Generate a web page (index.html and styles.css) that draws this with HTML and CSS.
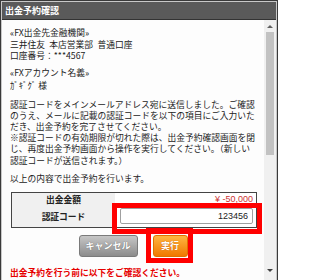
FILE: index.html
```html
<!DOCTYPE html>
<html lang="ja">
<head>
<meta charset="utf-8">
<title>出金予約確認</title>
<link rel="stylesheet" href="styles.css">
</head>
<body>
<div class="window">
  <div class="titlebar">出金予約確認</div>
  <div class="main">
    <div class="content">
      <p class="head">«FX出金先金融機関»</p>
      <p class="val">三井住友&ensp;本店営業部&ensp;普通口座</p>
      <p class="val">口座番号：***4567</p>
      <p class="head head2">«FXアカウント名義»</p>
      <p class="name">ｶﾞｷﾞｸﾞ 様</p>
      <p class="notice">認証コードをメインメールアドレス宛に送信しました。ご確認<br>のうえ、メールに記載の認証コードを以下の項目にご入力いた<br>だき、出金予約を完了させてください。<br>※認証コードの有効期限が切れた際は、出金予約確認画面を閉<br>じ、再度出金予約画面から操作を実行してください。（新しい<br>認証コードが送信されます。）</p>
      <p class="confirm">以上の内容で出金予約を行います。</p>
      <div class="summary">
        <div class="label row1">出金金額</div>
        <div class="value row1 amount">¥ -50,000</div>
        <div class="label row2">認証コード</div>
        <div class="value row2"><input class="code-input" type="text" value="123456" readonly></div>
      </div>
      <div class="actions">
        <button class="btn cancel" type="button">キャンセル</button>
        <button class="btn exec" type="button">実行</button>
      </div>
      <p class="warning">出金予約を行う前に以下をご確認ください。</p>
    </div>
    <div class="scrollbar">
      <div class="sb-up"><span class="arrow-up"></span></div>
      <div class="sb-track"><div class="sb-thumb"></div></div>
      <div class="sb-down"><span class="arrow-down"></span></div>
    </div>
  </div>
  <div class="mark mark-input"></div>
  <div class="mark mark-exec"></div>
</div>
</body>
</html>
```
FILE: styles.css
```css
html, body {
  margin: 0;
  padding: 0;
  background: #ffffff;
}
body {
  width: 280px;
  height: 280px;
  overflow: hidden;
  font-family: "Noto Sans CJK JP", "Noto Sans", sans-serif;
  font-size: 8.75px;
  color: #222222;
}
p {
  margin: 0;
}
.window {
  position: relative;
  width: 274px;
  height: 278px;
  border: 1px solid #3a3a3a;
  border-bottom: 0;
  padding: 1px 1px 0 1px;
  background: #c8c8c8;
  display: flex;
  flex-direction: column;
}
.titlebar {
  height: 17px;
  line-height: 17px;
  background: #5a5a5a;
  color: #ffffff;
  font-weight: bold;
  font-size: 9px;
  padding-left: 3px;
  border-bottom: 1px solid #333333;
  flex: none;
}
.main {
  flex: 1;
  display: flex;
  min-height: 0;
  background: #fdfdfd;
}
.content {
  flex: 1;
  padding: 6px 8px 0 8px;
  min-width: 0;
}
.head {
  line-height: 13px;
}
.head2 {
  margin-top: 5px;
}
.val {
  line-height: 11px;
}
.name {
  line-height: 13px;
}
.notice {
  margin-top: 6.5px;
  line-height: 11.2px;
  white-space: nowrap;
}
.confirm {
  margin-top: 7px;
  line-height: 11px;
}
.summary {
  margin-top: 8px;
  margin-left: 1px;
  width: 244px;
  border: 1px solid #444444;
  display: grid;
  grid-template-columns: 103px 1fr;
  grid-template-rows: 13px 21px;
}
.label {
  background: #f0f0f0;
  font-weight: bold;
  text-align: center;
  display: flex;
  align-items: center;
  justify-content: center;
}
.value {
  background: #ffffff;
  display: flex;
  align-items: center;
  justify-content: flex-end;
}
.amount {
  color: #cc3333;
  font-family: "Liberation Sans", Arial, sans-serif;
  font-size: 9px;
  padding-right: 3px;
}
.code-input {
  width: 133px;
  height: 16px;
  box-sizing: border-box;
  margin: 0 3px 0 4px;
  border: 1px solid #a0a0a0;
  border-radius: 2px;
  background: #ffffff;
  text-align: right;
  padding: 0 4px;
  font-family: "Liberation Sans", Arial, sans-serif;
  font-size: 9px;
  color: #222222;
  outline: none;
}
.actions {
  margin-top: 7px;
  display: flex;
  justify-content: center;
  gap: 15px;
}
.btn {
  height: 22px;
  border-radius: 3px;
  padding: 0;
  font-family: "Noto Sans CJK JP", "Noto Sans", sans-serif;
  font-weight: bold;
  font-size: 9px;
  color: #ffffff;
  line-height: 20px;
}
.cancel {
  width: 59px;
  background: linear-gradient(#c6c6c6, #8c8c8c);
  border: 1px solid #7a7a7a;
  text-shadow: 0 0 1px #555555;
}
.exec {
  width: 35px;
  background: linear-gradient(#ffb640, #f07800);
  border: 1px solid #e07000;
  text-shadow: 0 0 1px #b05000;
}
.warning {
  margin-top: 10px;
  line-height: 11px;
  color: #e60000;
  font-weight: bold;
  white-space: nowrap;
}
.scrollbar {
  width: 12px;
  flex: none;
  background: #f0f0f0;
  display: flex;
  flex-direction: column;
}
.sb-up {
  height: 11px;
  box-sizing: border-box;
  padding-top: 5px;
  display: flex;
  justify-content: center;
  align-items: flex-start;
}
.arrow-up {
  width: 0;
  height: 0;
  border-left: 3px solid transparent;
  border-right: 3px solid transparent;
  border-bottom: 3px solid #606060;
}
.sb-track {
  flex: 1;
  padding: 1px 2px 0 2px;
}
.sb-thumb {
  height: 123px;
  background: #c2c2c2;
}
.sb-down {
  height: 17px;
  box-sizing: border-box;
  padding-top: 6px;
  display: flex;
  justify-content: center;
  align-items: flex-start;
}
.arrow-down {
  width: 0;
  height: 0;
  border-left: 3px solid transparent;
  border-right: 3px solid transparent;
  border-top: 3px solid #404040;
}
.mark {
  position: absolute;
  box-sizing: border-box;
  border: 5px solid #ff0000;
}
.mark-input {
  left: 111px;
  top: 202px;
  width: 150px;
  height: 31px;
}
.mark-exec {
  left: 145px;
  top: 227px;
  width: 47px;
  height: 35px;
}
```
